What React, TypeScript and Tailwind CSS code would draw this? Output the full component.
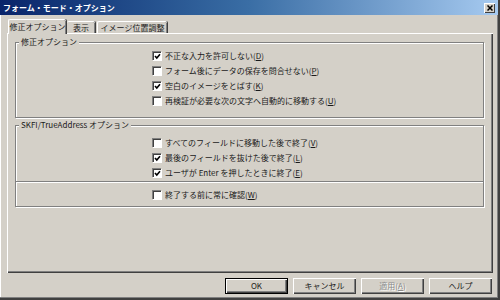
import React from "react";

const font = "font-['Noto_Sans_CJK_JP','Noto_Sans',sans-serif]";

function Check({ on }: { on: boolean }) {
  return (
    <span className="w-[9px] h-[9px] shrink-0 bg-white border-t border-l border-t-[#808080] border-l-[#808080] shadow-[inset_1px_1px_0_#404040,1px_1px_0_#fff] flex items-center justify-center">
      {on && (
        <svg width="7" height="7" viewBox="0 0 7 7">
          <path d="M1 3 L2.8 5 L6 1.2" stroke="#000" strokeWidth="1.6" fill="none" />
        </svg>
      )}
    </span>
  );
}

function Row({ on, text, key2 }: { on: boolean; text: string; key2: string }) {
  return (
    <div className="flex items-center h-[15px] pl-[136px]">
      <Check on={on} />
      <span className="ml-[4px] text-[8px] leading-[10px] text-[#1a1a1a] whitespace-nowrap">
        {text}(<span className="underline">{key2}</span>)
      </span>
    </div>
  );
}

function Btn({ label, def, disabled }: { label: React.ReactNode; def?: boolean; disabled?: boolean }) {
  return (
    <div
      className={
        "w-[63px] h-[16px] flex items-center justify-center text-[8px] leading-[10px] bg-[#d4d0c8] " +
        (def
          ? "border border-[#000] shadow-[inset_1px_1px_0_#fff,inset_-1px_-1px_0_#404040,inset_-2px_-2px_0_#808080]"
          : "shadow-[inset_1px_1px_0_#fff,inset_-1px_-1px_0_#404040,inset_-2px_-2px_0_#808080]") +
        (disabled ? " text-[#8a8a8a] [text-shadow:1px_1px_0_#fff]" : " text-[#1a1a1a]")
      }
    >
      {label}
    </div>
  );
}

export default function App() {
  return (
    <div className={"w-[500px] h-[300px] bg-[#d4d0c8] flex flex-col overflow-hidden shadow-[inset_-2px_-2px_0_#404040,inset_-3px_-3px_0_#808080,inset_1px_0_0_#fff] " + font}>
      {/* title bar */}
      <div className="h-[15px] w-[498px] bg-linear-to-r from-[#0a246a] via-[#3a6ea5] to-[#a6caf0] flex items-center pl-[3px] pr-[3px]">
        <span className="text-white text-[8px] leading-[10px] font-bold whitespace-nowrap">フォーム・モード・オプション</span>
        <div className="ml-auto w-[11px] h-[10px] bg-[#d4d0c8] shadow-[inset_1px_1px_0_#fff,inset_-1px_-1px_0_#404040] flex items-center justify-center">
          <svg width="6" height="6" viewBox="0 0 6 6">
            <path d="M0.5 0.5 L5.5 5.5 M5.5 0.5 L0.5 5.5" stroke="#000" strokeWidth="1.5" />
          </svg>
        </div>
      </div>

      {/* tabs */}
      <div className="mt-[4px] ml-[8px] flex items-end h-[14px]">
        <div className="relative z-10 -mb-px h-[15px] w-[58px] bg-[#d4d0c8] border-t border-l border-white shadow-[inset_-1px_0_0_#808080,1px_0_0_#404040] rounded-t-[2px] flex items-center justify-center text-[8px] leading-[10px] text-[#1a1a1a]">
          修正オプション
        </div>
        <div className="h-[12px] w-[28px] ml-px border-t border-white shadow-[inset_-1px_0_0_#808080,1px_0_0_#404040] rounded-t-[2px] flex items-center justify-center text-[8px] leading-[10px] text-[#1a1a1a]">
          表示
        </div>
        <div className="h-[12px] w-[70px] ml-[2px] border-t border-l border-white shadow-[inset_-1px_0_0_#808080,1px_0_0_#404040] rounded-t-[2px] flex items-center justify-center text-[8px] leading-[10px] text-[#1a1a1a]">
          イメージ位置調整
        </div>
      </div>

      {/* panel */}
      <div className="ml-[7px] w-[486px] h-[240px] border-t border-l border-white shadow-[inset_-1px_-1px_0_#404040,inset_-2px_-2px_0_#808080] px-[7px] pt-[3px] flex flex-col">
        <fieldset className="border border-[#808080] shadow-[inset_1px_1px_0_#fff,1px_1px_0_#fff] pb-[9px] w-[469px]">
          <legend className="ml-[3px] px-[2px] bg-[#d4d0c8] text-[8px] leading-[10px] text-[#1a1a1a]">修正オプション</legend>
          <div className="mt-[1px]">
            <Row on text="不正な入力を許可しない" key2="D" />
            <Row on={false} text="フォーム後にデータの保存を問合せない" key2="P" />
            <Row on text="空白のイメージをとばす" key2="K" />
            <Row on={false} text="再検証が必要な次の文字へ自動的に移動する" key2="U" />
          </div>
        </fieldset>

        <fieldset className="mt-[2px] border border-[#808080] shadow-[inset_1px_1px_0_#fff,1px_1px_0_#fff] pb-[4px] w-[469px]">
          <legend className="ml-[3px] px-[2px] bg-[#d4d0c8] text-[8px] leading-[10px] text-[#1a1a1a]">SKFI/TrueAddress オプション</legend>
          <div className="mt-[5px]">
            <Row on={false} text="すべてのフィールドに移動した後で終了" key2="V" />
            <Row on text="最後のフィールドを抜けた後で終了" key2="L" />
            <Row on text="ユーザが Enter を押したときに終了" key2="E" />
          </div>
          <div className="mt-[1px] h-[2px] border-t border-[#808080] border-b border-b-white" />
          <div className="mt-[4px]">
            <Row on={false} text="終了する前に常に確認" key2="W" />
          </div>
        </fieldset>
      </div>

      {/* buttons */}
      <div className="mt-[5px] flex pl-[225px] gap-[5px]">
        <Btn label="OK" def />
        <Btn label="キャンセル" />
        <Btn
          label={
            <span>
              適用(<span className="underline">A</span>)
            </span>
          }
          disabled
        />
        <Btn label="ヘルプ" />
      </div>
    </div>
  );
}
